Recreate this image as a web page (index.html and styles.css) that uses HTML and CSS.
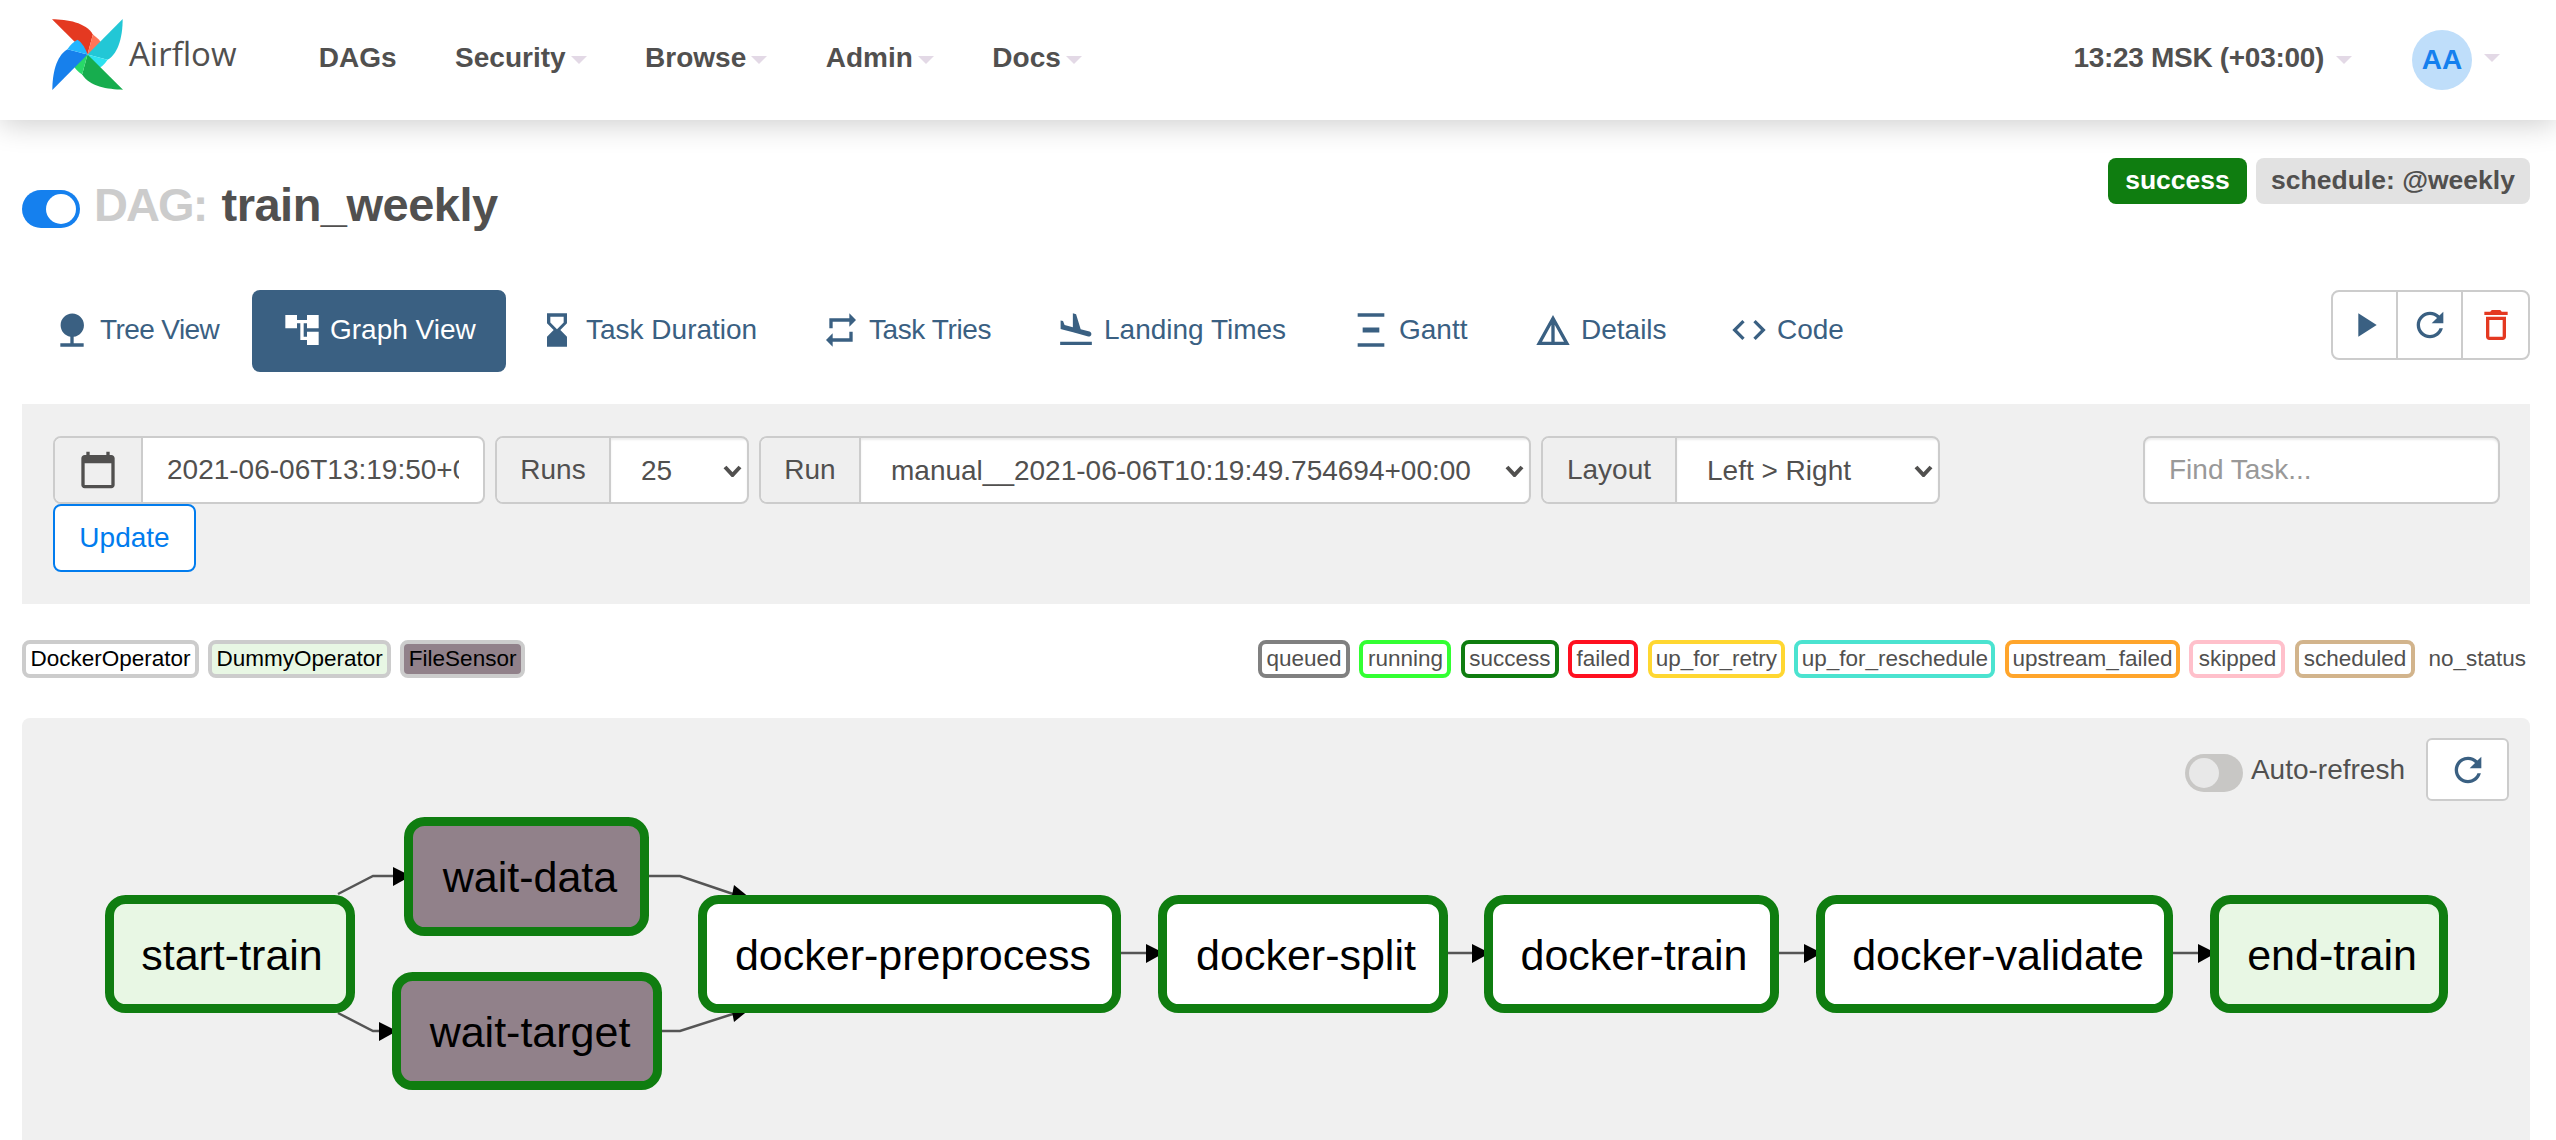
FILE: index.html
```html
<!DOCTYPE html>
<html>
  <head>
    <meta charset="utf-8">
    <title>Airflow - train_weekly</title>
    <link rel="stylesheet" href="styles.css">
  </head>
  <body>
    <!-- navbar -->
    <nav class="navbar">
      <a class="brand">
        <svg class="brand-logo" viewBox="-106 -106 212 212">
          <g>
            <path fill="#e43921" d="M0 0L-106-105C-60-105-5-95 16-60Z"/>
            <path fill="#ff7557" d="M0 0L16-60C30-50 38-42 44-30 35-15 15-5 0 0Z"/>
          </g>
          <g transform="rotate(90)">
            <path fill="#22c7d6" d="M0 0L-106-105C-60-105-5-95 16-60Z"/>
            <path fill="#2de2f0" d="M0 0L16-60C30-50 38-42 44-30 35-15 15-5 0 0Z"/>
          </g>
          <g transform="rotate(180)">
            <path fill="#17ad4e" d="M0 0L-106-105C-60-105-5-95 16-60Z"/>
            <path fill="#28d968" d="M0 0L16-60C30-50 38-42 44-30 35-15 15-5 0 0Z"/>
          </g>
          <g transform="rotate(270)">
            <path fill="#1780ec" d="M0 0L-106-105C-60-105-5-95 16-60Z"/>
            <path fill="#22b5ff" d="M0 0L16-60C30-50 38-42 44-30 35-15 15-5 0 0Z"/>
          </g>
        </svg>
        <span class="brand-name">Airflow</span>
      </a>
      <ul class="menu">
        <li class="menu-item">DAGs</li>
        <li class="menu-item">Security<span class="caret"></span></li>
        <li class="menu-item">Browse<span class="caret"></span></li>
        <li class="menu-item">Admin<span class="caret"></span></li>
        <li class="menu-item">Docs<span class="caret"></span></li>
      </ul>
      <div class="navbar-right">
        <div class="clock">13:23 MSK (+03:00)<span class="caret"></span></div>
        <div class="avatar">AA</div>
        <span class="caret caret-user"></span>
      </div>
    </nav>

    <main class="container">
      <!-- dag title -->
      <div class="dag-header">
        <h1 class="dag-title">
          <span class="switch switch-on"><span class="switch-knob"></span></span>
          <span class="dag-prefix">DAG:</span>
          <span class="dag-name">train_weekly</span>
        </h1>
        <div class="badges">
          <span class="badge badge-success">success</span>
          <span class="badge badge-schedule">schedule: @weekly</span>
        </div>
      </div>

      <!-- view tabs -->
      <div class="tabs-row">
        <ul class="tabs">
          <li class="tab">
            <svg class="icon" viewBox="0 0 24 24"><path d="M13 16.12c3.47-.41 6.17-3.36 6.17-6.95 0-3.87-3.13-7-7-7s-7 3.13-7 7c0 3.47 2.52 6.34 5.83 6.89V20H5v2h14v-2h-6v-3.88z"/></svg>
            Tree View
          </li>
          <li class="tab active">
            <svg class="icon" viewBox="0 0 24 24"><path d="M22 11V3h-7v3H9V3H2v8h7V8h2v10h4v3h7v-8h-7v3h-2V8h2v3z"/></svg>
            Graph View
          </li>
          <li class="tab">
            <svg class="icon" viewBox="0 0 24 24"><path d="M18 22l-.01-6L14 12l3.99-4.01L18 2H6v6l4 4-4 3.99V22h12zM8 7.5V4h8v3.5l-4 4-4-4z"/></svg>
            Task Duration
          </li>
          <li class="tab">
            <svg class="icon" viewBox="0 0 24 24"><path d="M7 7h10v3l4-4-4-4v3H5v6h2V7zm10 10H7v-3l-4 4 4 4v-3h12v-6h-2v4z"/></svg>
            Task Tries
          </li>
          <li class="tab">
            <svg class="icon" viewBox="0 0 24 24"><path d="M2.5 19h19v2h-19zm7.18-5.73l4.35 1.16 5.31 1.42c.8.21 1.62-.26 1.84-1.06.21-.8-.26-1.62-1.06-1.84l-5.31-1.42-2.76-9.02L10.12 2v8.28L5.15 8.95l-.93-2.32-1.45-.39v5.17l1.6.43 5.31 1.43z"/></svg>
            Landing Times
          </li>
          <li class="tab">
            <svg class="icon" viewBox="0 0 24 24"><path d="M4 22v-2h16v2H4zM4 4V2h16v2H4zm3 6.5v3h10v-3H7z"/></svg>
            Gantt
          </li>
          <li class="tab">
            <svg class="icon" viewBox="0 0 24 24"><path d="M12 3L2 21h20L12 3zm1 5.92L18.6 19H13V8.92zm-2 0V19H5.4L11 8.92z"/></svg>
            Details
          </li>
          <li class="tab">
            <svg class="icon" viewBox="0 0 24 24"><path d="M9.4 16.6L4.8 12l4.6-4.6L8 6l-6 6 6 6 1.4-1.4zm5.2 0l4.6-4.6-4.6-4.6L16 6l6 6-6 6-1.4-1.4z"/></svg>
            Code
          </li>
        </ul>
        <div class="actions">
          <button class="action-btn">
            <svg class="icon" viewBox="0 0 24 24"><path d="M8 5v14l11-7z"/></svg>
          </button>
          <button class="action-btn">
            <svg class="icon" viewBox="0 0 24 24"><path d="M17.65 6.35C16.2 4.9 14.21 4 12 4c-4.42 0-7.99 3.58-7.99 8s3.57 8 7.99 8c3.73 0 6.84-2.55 7.73-6h-2.08c-.82 2.33-3.04 4-5.65 4-3.31 0-6-2.69-6-6s2.69-6 6-6c1.66 0 3.14.69 4.22 1.78L13 11h7V4l-2.35 2.35z"/></svg>
          </button>
          <button class="action-btn action-delete">
            <svg class="icon" viewBox="0 0 24 24"><path d="M6 19c0 1.1.9 2 2 2h8c1.1 0 2-.9 2-2V7H6v12zM8 9h8v10H8V9zm7.5-5l-1-1h-5l-1 1H5v2h14V4h-3.5z"/></svg>
          </button>
        </div>
      </div>

      <!-- filter form -->
      <form class="filters">
        <div class="filters-left">
          <div class="filters-row">
            <div class="group group-date">
              <span class="addon addon-date">
                <svg class="icon" viewBox="0 0 24 24"><path d="M20 3h-1V1h-2v2H7V1H5v2H4c-1.1 0-2 .9-2 2v16c0 1.1.9 2 2 2h16c1.1 0 2-.9 2-2V5c0-1.1-.9-2-2-2zm0 18H4V8h16v13z"/></svg>
              </span>
              <input class="field field-date" value="2021-06-06T13:19:50+03:00">
            </div>
            <div class="group group-runs">
              <span class="addon addon-runs">Runs</span>
              <div class="select-wrap">
                <select class="field field-runs"><option>25</option></select>
                <svg class="chevron" viewBox="0 0 19 12"><path d="M2 2l7.5 8L17 2"/></svg>
              </div>
            </div>
            <div class="group group-run">
              <span class="addon addon-run">Run</span>
              <div class="select-wrap">
                <select class="field field-run"><option>manual__2021-06-06T10:19:49.754694+00:00</option></select>
                <svg class="chevron" viewBox="0 0 19 12"><path d="M2 2l7.5 8L17 2"/></svg>
              </div>
            </div>
            <div class="group group-layout">
              <span class="addon addon-layout">Layout</span>
              <div class="select-wrap">
                <select class="field field-layout"><option>Left &gt; Right</option></select>
                <svg class="chevron" viewBox="0 0 19 12"><path d="M2 2l7.5 8L17 2"/></svg>
              </div>
            </div>
          </div>
          <button type="button" class="btn-update">Update</button>
        </div>
        <input class="find-task" placeholder="Find Task...">
      </form>

      <!-- legend -->
      <div class="legend">
        <div class="legend-group">
          <span class="legend-item op-docker">DockerOperator</span>
          <span class="legend-item op-dummy">DummyOperator</span>
          <span class="legend-item op-sensor">FileSensor</span>
        </div>
        <div class="legend-group legend-states">
          <span class="legend-item st-queued">queued</span>
          <span class="legend-item st-running">running</span>
          <span class="legend-item st-success">success</span>
          <span class="legend-item st-failed">failed</span>
          <span class="legend-item st-retry">up_for_retry</span>
          <span class="legend-item st-reschedule">up_for_reschedule</span>
          <span class="legend-item st-upstream">upstream_failed</span>
          <span class="legend-item st-skipped">skipped</span>
          <span class="legend-item st-scheduled">scheduled</span>
          <span class="legend-plain">no_status</span>
        </div>
      </div>

      <!-- graph -->
      <section class="graph-panel">
        <div class="graph-toolbar">
          <span class="switch switch-off"><span class="switch-knob"></span></span>
          <span class="auto-label">Auto-refresh</span>
          <button class="refresh-btn">
            <svg class="icon" viewBox="0 0 24 24"><path d="M17.65 6.35C16.2 4.9 14.21 4 12 4c-4.42 0-7.99 3.58-7.99 8s3.57 8 7.99 8c3.73 0 6.84-2.55 7.73-6h-2.08c-.82 2.33-3.04 4-5.65 4-3.31 0-6-2.69-6-6s2.69-6 6-6c1.66 0 3.14.69 4.22 1.78L13 11h7V4l-2.35 2.35z"/></svg>
          </button>
        </div>
        <svg class="graph" viewBox="22 800 2508 340">
          <g class="edges">
            <polyline points="338,894 373,876 394,876"/>
            <polyline points="338,1013 373,1031 381,1031"/>
            <polyline points="649,876 680,876 736,895"/>
            <polyline points="662,1031 680,1031 736,1013"/>
            <polyline points="1121,953 1148,953"/>
            <polyline points="1448,953 1474,953"/>
            <polyline points="1779,953 1806,953"/>
            <polyline points="2173,953 2200,953"/>
          </g>
          <g class="arrows">
            <polygon points="393,867 393,886 411,876"/>
            <polygon points="379,1022 379,1041 397,1031"/>
            <polygon points="734,885 731,901 750,898"/>
            <polygon points="734,1022 731,1006 750,1009"/>
            <polygon points="1146,944 1146,963 1164,953"/>
            <polygon points="1472,944 1472,963 1490,953"/>
            <polygon points="1804,944 1804,963 1822,953"/>
            <polygon points="2198,944 2198,963 2216,953"/>
          </g>
          <rect class="node node-dummy" x="109.5" y="899.5" width="241" height="109" rx="16"/>
          <rect class="node node-sensor" x="408.5" y="821.5" width="236" height="110" rx="16"/>
          <rect class="node node-sensor" x="396.5" y="976.5" width="261" height="109" rx="16"/>
          <rect class="node node-docker" x="702.5" y="899.5" width="414" height="109" rx="16"/>
          <rect class="node node-docker" x="1162.5" y="899.5" width="281" height="109" rx="16"/>
          <rect class="node node-docker" x="1488.5" y="899.5" width="286" height="109" rx="16"/>
          <rect class="node node-docker" x="1820.5" y="899.5" width="348" height="109" rx="16"/>
          <rect class="node node-dummy" x="2214.5" y="899.5" width="229" height="109" rx="16"/>
          <text class="node-label" x="232" y="970">start-train</text>
          <text class="node-label" x="530" y="892">wait-data</text>
          <text class="node-label" x="530" y="1047">wait-target</text>
          <text class="node-label" x="913" y="970">docker-preprocess</text>
          <text class="node-label" x="1306" y="970">docker-split</text>
          <text class="node-label" x="1634" y="970">docker-train</text>
          <text class="node-label" x="1998" y="970">docker-validate</text>
          <text class="node-label" x="2332" y="970">end-train</text>
        </svg>
      </section>
    </main>
  </body>
</html>
```

FILE: styles.css
```css
* { box-sizing: border-box; }
html, body { height: 1140px; overflow: hidden; }
body { margin: 0; background: #fff; color: #51504f; font: 28px "Liberation Sans", Arial, sans-serif; }
ul { list-style: none; margin: 0; padding: 0; }
button, input, select { font: inherit; color: inherit; }

/* navbar */
.navbar { height: 120px; display: flex; align-items: center; background: #fff; box-shadow: 0 4px 28px rgba(0,0,0,.2); position: relative; }
.brand { display: flex; align-items: center; margin-left: 52px; padding-bottom: 12px; }
.brand-logo { width: 71px; height: 71px; display: block; }
.brand-name { font: 33px "Open Sans", sans-serif; margin-left: 6px; line-height: 40px; }
.menu { display: flex; margin-left: 53px; padding-bottom: 4px; font-weight: bold; }
.menu-item { padding: 0 29.25px; display: flex; align-items: center; }
.caret { width: 0; height: 0; margin: 4px 0 0 5px; border-top: 8px solid #e3d9e6; border-left: 8px solid transparent; border-right: 8px solid transparent; }
.navbar-right { margin-left: auto; margin-right: 56px; display: flex; align-items: center; font-weight: bold; }
.clock { display: flex; align-items: center; padding-bottom: 4px; letter-spacing: -.3px; }
.clock .caret { margin-left: 12px; }
.avatar { width: 60px; height: 60px; margin-left: 60px; border-radius: 50%; background: #bfdefa; color: #1580ee; display: flex; align-items: center; justify-content: center; }
.caret-user { margin: 0 0 4px 12px; }

/* page */
.container { padding: 0 26px 0 22px; }
.dag-header { display: flex; justify-content: space-between; align-items: flex-start; height: 170px; padding-top: 38px; }
.dag-title { display: flex; align-items: flex-start; margin: 0; font-size: 47px; line-height: 44px; }
.dag-title .switch { margin-top: 32px; }
.dag-prefix { color: #ccc; margin: 25px 15px 0 14px; letter-spacing: -1.9px; }
.dag-name { margin-top: 25px; letter-spacing: -.5px; }
.switch { display: inline-block; width: 58px; height: 38px; border-radius: 19px; padding: 4px; flex: none; }
.switch-knob { display: block; width: 30px; height: 30px; border-radius: 50%; }
.switch-on { background: #1580ee; padding-left: 24px; }
.switch-on .switch-knob { background: #fff; }
.switch-off { background: #c8c7c5; }
.switch-off .switch-knob { background: #e8e8e8; }
.badges { display: flex; gap: 9px; }
.badge { height: 46px; padding: 0 0 2px; border-radius: 8px; font-size: 26.5px; font-weight: bold; display: flex; align-items: center; justify-content: center; white-space: nowrap; }
.badge-success { background: #0f7d10; color: #fff; width: 139px; }
.badge-schedule { background: #e2e2e2; width: 274px; }

/* tabs */
.tabs-row { display: flex; justify-content: space-between; align-items: flex-start; height: 82px; }
.tabs { display: flex; color: #3a6082; }
.tab { height: 82px; padding: 0 0 2px 30px; display: flex; align-items: center; gap: 8px; border-radius: 8px; white-space: nowrap; }
.tab:nth-child(1) { width: 230px; letter-spacing: -.6px; }
.tab:nth-child(2) { width: 254px; }
.tab:nth-child(3) { width: 285px; padding-left: 31px; gap: 9px; }
.tab:nth-child(4) { width: 235px; letter-spacing: -.4px; }
.tab:nth-child(5) { width: 295px; }
.tab:nth-child(6) { width: 182px; }
.tab:nth-child(7) { width: 196px; }
.tab.active { background: #3a6082; color: #fff; }
.icon { width: 40px; height: 40px; display: block; fill: currentColor; flex: none; }
.actions { display: flex; height: 70px; border: 2px solid #ccc; border-radius: 8px; background: #fff; color: #3a6082; overflow: hidden; }
.action-btn { width: 65px; border: 0; border-right: 2px solid #ccc; background: none; padding: 0; display: flex; align-items: center; justify-content: center; }
.action-delete { border-right: 0; color: #e43921; }

/* filter form */
.filters { margin-top: 32px; height: 200px; padding: 32px 30px 32px 31px; background: #f0f0f0; display: flex; justify-content: space-between; align-items: flex-start; }
.filters-row { display: flex; gap: 10px; }
.group { height: 68px; display: flex; border: 2px solid #ccc; border-radius: 8px; background: #fff; overflow: hidden; }
.group-date { width: 432px; }
.group-runs { width: 254px; }
.group-run { width: 772px; }
.group-layout { width: 399px; }
.addon { flex: none; display: flex; align-items: center; justify-content: center; background: #efefef; border-right: 2px solid #ccc; }
.addon-date { width: 88px; }
.addon-runs { width: 114px; }
.addon-run { width: 100px; }
.addon-layout { width: 134px; }
.field { flex: 1; min-width: 0; border: 0; outline: 0; background: none; box-shadow: inset 0 2px 2px rgba(0,0,0,.08); }
.field-date { padding: 0 0 0 24px; margin-right: 24px; box-shadow: none; }
.select-wrap { flex: 1; min-width: 0; display: flex; position: relative; }
.select-wrap select { appearance: none; -webkit-appearance: none; width: 100%; height: 100%; padding: 0 40px 0 30px; }
.chevron { position: absolute; right: 5px; top: 27px; width: 19px; height: 12px; fill: none; stroke: #51504f; stroke-width: 4; }
.btn-update { display: block; width: 143px; height: 68px; padding: 0; border: 2px solid #017cee; border-radius: 8px; background: #fff; color: #017cee; }
.find-task { width: 357px; height: 68px; padding: 0 24px; border: 2px solid #ccc; border-radius: 8px; background: #fff; outline: 0; box-shadow: inset 0 2px 2px rgba(0,0,0,.08); }
.find-task::placeholder { color: #999; opacity: 1; }

/* legend */
.legend { margin-top: 36px; height: 38px; display: flex; justify-content: space-between; }
.legend-group { display: flex; gap: 9px; }
.legend-states { gap: 9.5px; }
.legend-item, .legend-plain { height: 38px; font-size: 22.5px; line-height: 30px; white-space: nowrap; text-align: center; }
.legend-item { padding: 0 4.5px; border: 4px solid #ccc; border-radius: 8px; background: #fff; }
.legend-states .legend-item { padding: 0; }
.legend-plain { padding: 4px 4px 0 4px; }
.op-docker, .op-dummy, .op-sensor { color: #000; }
.op-dummy { background: #e8f7e4; }
.op-sensor { background: #91818a; }
.st-queued { width: 92px; border-color: #808080; }
.st-running { width: 92px; border-color: #32ff32; }
.st-success { width: 98px; border-color: #0f7d10; }
.st-failed { width: 70px; border-color: #ff1020; }
.st-retry { width: 137px; border-color: #ffd731; }
.st-reschedule { width: 201px; border-color: #4be3d0; }
.st-upstream { width: 175px; border-color: #ffa52b; }
.st-skipped { width: 96px; border-color: #ffc0cb; }
.st-scheduled { width: 120px; border-color: #d2b48c; }

/* graph */
.graph-panel { margin-top: 40px; height: 422px; background: #f0f0f0; border-radius: 8px 8px 0 0; }
.graph-toolbar { height: 82px; padding: 20px 21px 0 0; display: flex; justify-content: flex-end; align-items: flex-start; }
.graph-toolbar .switch { margin-top: 16px; }
.auto-label { margin: 12px 0 0 8px; line-height: 40px; }
.refresh-btn { width: 83px; height: 63px; margin-left: 21px; padding: 0; border: 2px solid #ccc; border-radius: 6px; background: #fff; color: #3a6082; display: flex; align-items: center; justify-content: center; }
.graph { display: block; width: 2508px; height: 340px; }
.edges polyline { fill: none; stroke: #555; stroke-width: 2.5; }
.arrows polygon { fill: #000; }
.node { stroke: #0f7d10; stroke-width: 9; }
.node-docker { fill: #fff; }
.node-dummy { fill: #e8f7e4; }
.node-sensor { fill: #91818a; }
.node-label { font-size: 43px; fill: #000; text-anchor: middle; }
```
